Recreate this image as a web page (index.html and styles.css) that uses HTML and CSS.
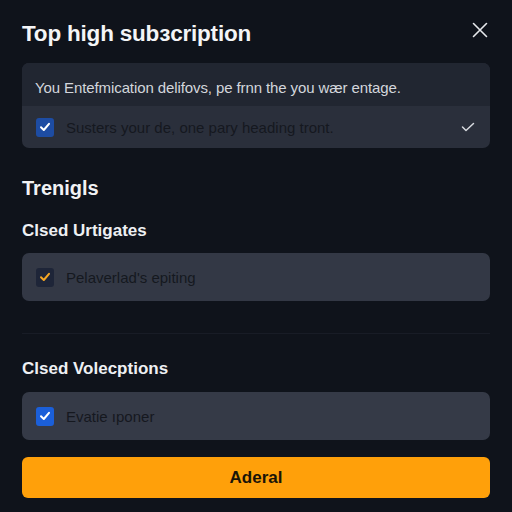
FILE: index.html
```html
<!DOCTYPE html>
<html>
<head>
<meta charset="utf-8">
<link rel="stylesheet" href="styles.css">
</head>
<body>
<div class="page">
  <header class="header">
    <h1 class="title">Top high subзcription</h1>
    <svg class="close" width="16" height="16" viewBox="0 0 16 16"><path d="M1.5 1.5 L14.5 14.5 M14.5 1.5 L1.5 14.5" stroke="#e6e8ec" stroke-width="1.6" stroke-linecap="round"/></svg>
  </header>
  <div class="card card-split">
    <div class="card-top">You Entefmication delifovs, pe frnn the you wær entage.</div>
    <div class="card-row">
      <span class="cb cb-navy"><svg width="12" height="12" viewBox="0 0 12 12"><path d="M2 6.2 L4.8 9 L10 2.8" fill="none" stroke="#fff" stroke-width="2" stroke-linecap="round" stroke-linejoin="round"/></svg></span>
      <span class="row-text">Susters your de, one pary heading tront.</span>
      <svg class="chev" width="14" height="10" viewBox="0 0 14 10"><path d="M1.5 5 L5 8.5 L12.5 1.5" fill="none" stroke="#d6d9de" stroke-width="1.5" stroke-linecap="round" stroke-linejoin="round"/></svg>
    </div>
  </div>
  <h2 class="section">Trenigls</h2>
  <h3 class="sub">Clsed Urtigates</h3>
  <div class="card card-row solo">
    <span class="cb cb-dark"><svg width="12" height="12" viewBox="0 0 12 12"><path d="M2 6.2 L4.8 9 L10 2.8" fill="none" stroke="#f5a623" stroke-width="2" stroke-linecap="round" stroke-linejoin="round"/></svg></span>
    <span class="row-text">Pelaverlad's epiting</span>
  </div>
  <hr class="divider">
  <h3 class="sub sub2">Clsed Volecptions</h3>
  <div class="card card-row solo solo2">
    <span class="cb cb-blue"><svg width="12" height="12" viewBox="0 0 12 12"><path d="M2 6.2 L4.8 9 L10 2.8" fill="none" stroke="#fff" stroke-width="2" stroke-linecap="round" stroke-linejoin="round"/></svg></span>
    <span class="row-text">Evatie ıponer</span>
  </div>
  <button class="btn">Aderal</button>
</div>
</body>
</html>
```
FILE: styles.css
```css
* { box-sizing: border-box; }
html, body { margin: 0; padding: 0; }
body {
  background: #0f131b;
  font-family: "Liberation Sans", Arial, sans-serif;
  width: 512px;
  height: 512px;
  overflow: hidden;
}
.page {
  padding: 0 22px;
  display: flex;
  flex-direction: column;
}
.header {
  height: 63px;
  display: flex;
  align-items: center;
  justify-content: space-between;
  padding-top: 4px;
}
.title {
  margin: 0;
  color: #f4f5f7;
  font-size: 22.5px;
  font-weight: 700;
  letter-spacing: -0.2px;
}
.close { margin-right: 2px; margin-top: -8px; }
.card {
  border-radius: 7px;
  overflow: hidden;
}
.card-split { height: 85px; background: #2a2f3b; display: flex; flex-direction: column; }
.card-top {
  height: 43px;
  background: #212631;
  color: #d3d6dc;
  font-size: 15px;
  padding: 16px 0 0 13px;
  letter-spacing: -0.1px;
}
.card-row {
  flex: 1;
  display: flex;
  align-items: center;
  padding: 0 14px 0 14px;
}
.cb {
  width: 18px;
  height: 19px;
  border-radius: 3px;
  display: flex;
  align-items: center;
  justify-content: center;
  flex: none;
}
.cb-navy { background: #1d4ca3; }
.cb-dark { background: #1e2538; }
.cb-blue { background: #1b5fd9; }
.row-text {
  margin-left: 12px;
  color: #15181f;
  font-size: 15px;
  flex: 1;
}
.chev { margin-right: 1px; }
.section {
  margin: 28px 0 0 0;
  color: #f1f2f4;
  font-size: 20px;
  font-weight: 700;
  height: 24px;
  line-height: 24px;
}
.sub {
  margin: 20px 0 0 0;
  color: #eef0f3;
  font-size: 17px;
  font-weight: 600;
  height: 22px;
  line-height: 22px;
}
.solo {
  margin-top: 11px;
  height: 48px;
  background: #333845;
  flex: none;
}
.divider {
  margin: 32px 0 0 0;
  border: 0;
  height: 1px;
  background: #181c26;
}
.sub2 { margin-top: 24px; }
.solo2 { background: #353a47; margin-top: 12px; height: 48px; }
.btn {
  margin-top: 17px;
  height: 41px;
  border: 0;
  border-radius: 6px;
  background: #ffa00a;
  color: #1a1408;
  font-family: "Liberation Sans", Arial, sans-serif;
  font-size: 17px;
  font-weight: 700;
}
```
